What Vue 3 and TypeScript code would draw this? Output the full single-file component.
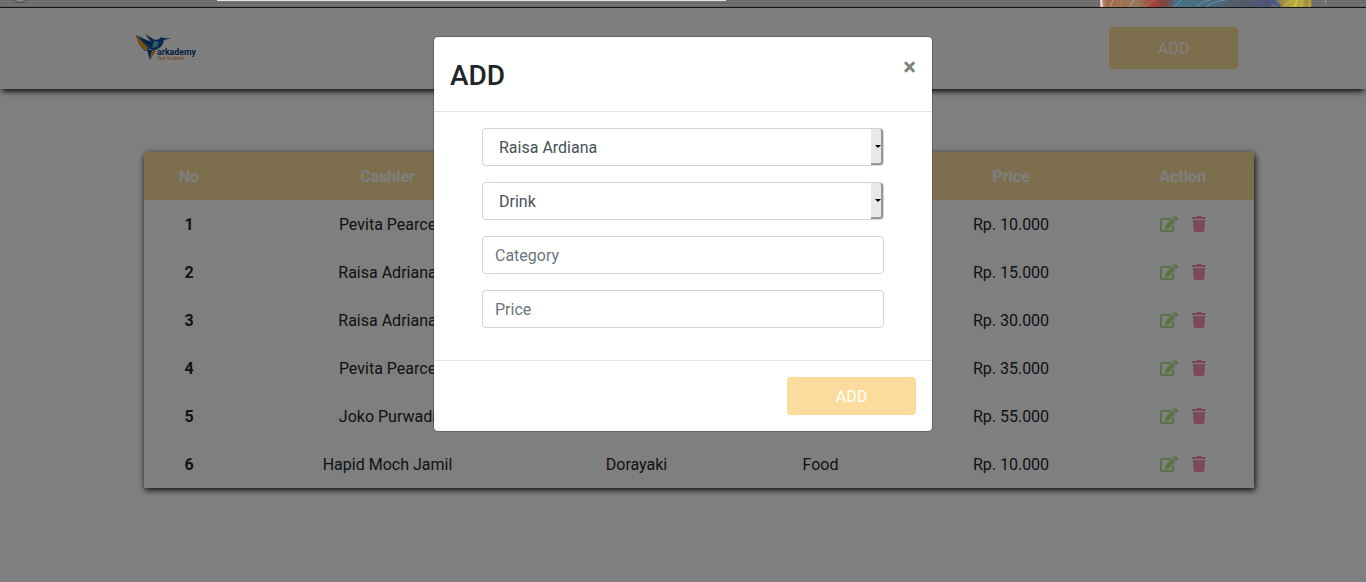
<script setup lang="ts">
interface Sale {
  no: number
  cashier: string
  product: string
  category: string
  price: string
}

const sales: Sale[] = [
  { no: 1, cashier: 'Pevita Pearce', product: 'Latte', category: 'Drink', price: 'Rp. 10.000' },
  { no: 2, cashier: 'Raisa Adriana', product: 'Mocha', category: 'Drink', price: 'Rp. 15.000' },
  { no: 3, cashier: 'Raisa Adriana', product: 'Gado-gado', category: 'Food', price: 'Rp. 30.000' },
  { no: 4, cashier: 'Pevita Pearce', product: 'Cake', category: 'Food', price: 'Rp. 35.000' },
  { no: 5, cashier: 'Joko Purwadi', product: 'Steak', category: 'Food', price: 'Rp. 55.000' },
  { no: 6, cashier: 'Hapid Moch Jamil', product: 'Dorayaki', category: 'Food', price: 'Rp. 10.000' },
]
const selects: string[] = ['Raisa Ardiana', 'Drink']
const inputs: string[] = ['Category', 'Price']
</script>

<template>
  <div class="screen">
    <div class="chrome">
      <span class="back"></span>
      <span class="address"></span>
      <svg class="theme" width="212" height="7" viewBox="0 0 212 7">
        <defs>
          <linearGradient id="themeFill">
            <stop offset="0" stop-color="#d8a09a" />
            <stop offset=".03" stop-color="#a06e4c" />
            <stop offset=".18" stop-color="#98765c" />
            <stop offset=".25" stop-color="#a3423a" />
            <stop offset=".31" stop-color="#7d4640" />
            <stop offset=".36" stop-color="#477186" />
            <stop offset=".55" stop-color="#4c6a7c" />
            <stop offset=".66" stop-color="#555a66" />
            <stop offset=".8" stop-color="#4c5574" />
            <stop offset=".86" stop-color="#a28a48" />
            <stop offset=".92" stop-color="#b9b436" />
            <stop offset="1" stop-color="#9c8146" />
          </linearGradient>
        </defs>
        <rect width="212" height="7" fill="url(#themeFill)" />
        <g fill="none" opacity=".65">
          <path d="M1 0l1 7" stroke="#fff" stroke-width="2" />
          <path d="M13 0l-3 7M34 0l-5 7" stroke="#d8b49a" />
          <path d="M22 0l-2 7M45 7Q49 2 55 0" stroke="#c58a54" />
          <path d="M74 7L82 0M96 7Q102 1 110 0M106 7Q114 1 126 0" stroke="#6aa5bf" />
          <path d="M151 0q6 7 14 0" stroke="#5564a6" />
          <path d="M172 0l8 7" stroke="#3553a0" stroke-width="4" />
          <path d="M184 7l7-7M195 7l2-7M203 0l-2 7M210 0l-1 7" stroke="#dcd36a" />
        </g>
      </svg>
      <span class="tick"></span>
    </div>

    <header class="navbar">
      <svg class="logo" width="64" height="30" viewBox="0 0 64 30">
        <path d="M1 2L14 8 19 15 10 18Q3 12 1 2z" fill="#1d73b8" />
        <path d="M1 2Q3 12 10 18L13 15z" fill="#f59a22" />
        <path d="M4 5L17 9 18 16z" fill="#123f7d" />
        <path d="M10 1L20 7 24 6Q26 3 29 5L36 5.4 29 7Q28 15 18 18L13 13 17 10z" fill="#14559b" />
        <path d="M10 1L15 8 17 11z" fill="#f6a22b" />
        <path d="M19 8L24 9 22 14 17 15z" fill="#58bdd9" />
        <path d="M21 14L17 20 15 20z" fill="#174883" />
        <path d="M15 17L21 18 15 27 17 20z" fill="#f39720" />
        <path d="M12 17L17 17 15 27z" fill="#11498b" />
        <text x="22" y="22" font-size="9" font-weight="700" textLength="39" lengthAdjust="spacingAndGlyphs" fill="#123b78">arkademy</text>
        <text x="22" y="27.3" font-size="5" textLength="27" lengthAdjust="spacingAndGlyphs" fill="#e87a22">Tech Academy</text>
      </svg>
      <button class="btn nav-btn">ADD</button>
    </header>

    <main class="content">
      <table class="table">
        <colgroup>
          <col class="c-no" /><col class="c-cashier" /><col class="c-product" />
          <col class="c-category" /><col class="c-price" /><col class="c-action" />
        </colgroup>
        <thead>
          <tr>
            <th>No</th><th>Cashier</th><th>Product</th><th>Category</th><th>Price</th><th class="action">Action</th>
          </tr>
        </thead>
        <tbody>
          <tr v-for="s in sales" :key="s.no">
            <th>{{ s.no }}</th>
            <td>{{ s.cashier }}</td>
            <td>{{ s.product }}</td>
            <td>{{ s.category }}</td>
            <td>{{ s.price }}</td>
            <td class="action">
              <div class="icons">
                <svg width="18" height="16" viewBox="0 0 576 512" fill="#b0e48a">
                  <path d="M402.6 83.2l90.2 90.2c3.8 3.8 3.8 10 0 13.8L274.4 405.6l-92.8 10.3c-12.4 1.4-22.9-9.1-21.5-21.5l10.3-92.8L388.8 83.2c3.8-3.8 10-3.8 13.8 0zm162-22.9l-48.8-48.8c-15.2-15.2-39.9-15.2-55.2 0l-35.4 35.4c-3.8 3.8-3.8 10 0 13.8l90.2 90.2c3.8 3.8 10 3.8 13.8 0l35.4-35.4c15.2-15.3 15.2-40 0-55.2zM384 346.2V448H64V128h229.8c3.2 0 6.2-1.3 8.5-3.5l40-40c7.6-7.6 2.2-20.5-8.5-20.5H48C21.5 64 0 85.5 0 112v352c0 26.5 21.5 48 48 48h352c26.5 0 48-21.5 48-48V306.2c0-10.7-12.9-16-20.5-8.5l-40 40c-2.2 2.3-3.5 5.3-3.5 8.5z" />
                </svg>
                <svg width="14" height="16" viewBox="0 0 448 512" fill="#f990b0">
                  <path d="M432 32H312l-9.4-18.7A24 24 0 0 0 281.1 0H166.8a23.72 23.72 0 0 0-21.4 13.3L136 32H16A16 16 0 0 0 0 48v32a16 16 0 0 0 16 16h416a16 16 0 0 0 16-16V48a16 16 0 0 0-16-16zM53.2 467a48 48 0 0 0 47.9 45h245.8a48 48 0 0 0 47.9-45L416 128H32z" />
                </svg>
              </div>
            </td>
          </tr>
        </tbody>
      </table>
    </main>

    <div class="backdrop">
      <section class="modal">
        <div class="modal-header">
          <h3>ADD</h3>
          <button class="close">×</button>
        </div>
        <div class="modal-body">
          <div v-for="s in selects" :key="s" class="field select">
            <span>{{ s }}</span>
            <i class="arrow"></i>
          </div>
          <input v-for="p in inputs" :key="p" class="field" :placeholder="p" />
        </div>
        <div class="modal-footer">
          <button class="btn">ADD</button>
        </div>
      </section>
    </div>
  </div>
</template>

<style>
body {
  margin: 0;
  overflow: hidden;
}
</style>

<style scoped>
* {
  box-sizing: border-box;
}
.screen {
  position: relative;
  width: 1366px;
  height: 582px;
  overflow: hidden;
  background: #fff;
  color: #212529;
  font: 16px/24px Roboto, sans-serif;
}
.chrome {
  position: relative;
  z-index: 3;
  height: 8px;
  overflow: hidden;
  border-bottom: 1px solid #151515;
  background: repeating-linear-gradient(#686868 0 1px, #777 1px 2px, #6c6c6c 2px 3px);
}
.back {
  position: absolute;
  left: 9px;
  top: -19px;
  width: 22px;
  height: 22px;
  border: 1px solid #484848;
  border-radius: 50%;
  background: #858585;
}
.address {
  position: absolute;
  left: 217px;
  top: 0;
  width: 509px;
  height: 1px;
  background: #e1e4e1;
}
.theme {
  position: absolute;
  left: 1100px;
  top: 0;
}
.tick {
  position: absolute;
  left: 1325px;
  top: 0;
  width: 1px;
  height: 4px;
  background: #999;
}
.navbar {
  display: flex;
  justify-content: space-between;
  align-items: center;
  height: 81px;
  padding: 0 128px 0 135px;
  background: #fdfdfd;
  box-shadow: 0 4px 6px -2px #000;
}
.logo {
  margin-top: -2px;
}
.btn {
  width: 129px;
  height: 38px;
  padding: 2px 0 0;
  border: 0;
  border-radius: 4px;
  background: #fbdc9c;
  color: #fff;
  font: 16px/24px Roboto, sans-serif;
}
.nav-btn {
  height: 42px;
  margin-top: -1px;
}
.content {
  padding: 63px 112px 0 144px;
}
.table {
  width: 1110px;
  table-layout: fixed;
  border-collapse: collapse;
  border-radius: 4px 4px 0 0;
  text-align: center;
  box-shadow: 1px 2px 6px rgba(0, 0, 0, 0.95);
}
.table tr {
  height: 48px;
}
.table th,
.table td {
  padding: 2px 0 0;
}
.table th:nth-child(-n + 4),
.table td:nth-child(-n + 4) {
  padding-left: 1px;
}
.table thead {
  background: #fbdc9c;
  color: #fff;
}
.c-no { width: 89px; }
.c-cashier { width: 308px; }
.c-product { width: 190px; }
.c-category { width: 178px; }
.c-price { width: 204px; }
.c-action { width: 141px; }
.table .action {
  padding-right: 2px;
}
.table td.action {
  padding-top: 0;
}
.icons {
  display: flex;
  justify-content: center;
  gap: 14px;
}
.backdrop {
  position: absolute;
  z-index: 2;
  inset: 8px 0 0;
  display: flex;
  justify-content: center;
  align-items: flex-start;
  padding-top: 28px;
  background: rgba(0, 0, 0, 0.5);
}
.modal {
  width: 500px;
  border: 1px solid rgba(0, 0, 0, 0.2);
  border-radius: 5px;
  background: #fff;
  background-clip: padding-box;
}
.modal-header {
  display: flex;
  justify-content: space-between;
  align-items: flex-start;
  height: 75px;
  padding: 18px 16px 14px;
  border-bottom: 1px solid #dee2e6;
}
.modal-header h3 {
  margin: 0;
  font-size: 28px;
  font-weight: 500;
  line-height: 42px;
}
.close {
  margin: -16px;
  padding: 16px;
  border: 0;
  background: none;
  color: #000;
  font: 700 24px/24px Roboto, sans-serif;
  opacity: 0.5;
}
.modal-body {
  display: flex;
  flex-direction: column;
  gap: 16px;
  padding: 16px 48px 32px;
}
.field {
  width: 402px;
  height: 38px;
  padding: 6px 12px;
  border: 1px solid #ced4da;
  border-radius: 4px;
  background: #fff;
  color: #495057;
  font: 16px/24px Roboto, sans-serif;
}
.field::placeholder {
  color: #6c757d;
  opacity: 1;
}
.select {
  display: flex;
  justify-content: space-between;
  padding: 0 0 0 16px;
  line-height: 38px;
}
.arrow {
  display: flex;
  justify-content: center;
  align-items: center;
  width: 12px;
  height: 36px;
  border-right: 2px solid #979797;
  border-bottom: 2px solid #979797;
  border-radius: 0 3px 3px 0;
  background: #e8e8e7;
}
.arrow::after {
  content: '';
  margin: 1px 0 0 3px;
  border: 3px solid transparent;
  border-top-color: #000;
  border-bottom: 0;
}
.modal-footer {
  display: flex;
  justify-content: flex-end;
  padding: 16px;
  border-top: 1px solid #dee2e6;
}
</style>
